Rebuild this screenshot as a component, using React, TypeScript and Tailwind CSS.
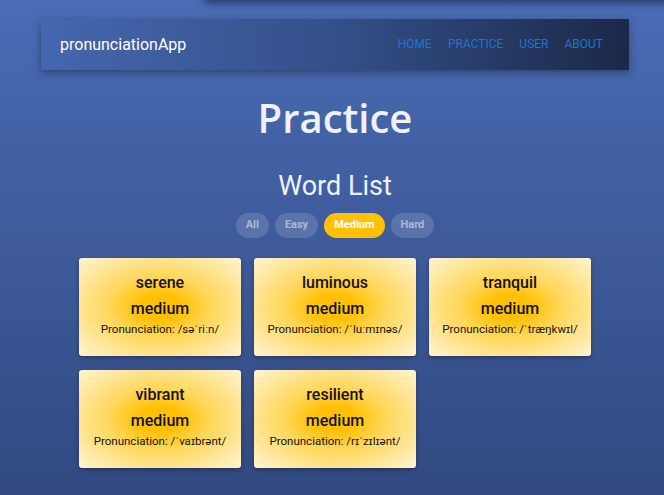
import { useState } from 'react';

interface Word {
  word: string;
  level: string;
  ipa: string;
}

const WORDS: Word[] = [
  { word: 'serene', level: 'medium', ipa: '/səˈriːn/' },
  { word: 'luminous', level: 'medium', ipa: '/ˈluːmɪnəs/' },
  { word: 'tranquil', level: 'medium', ipa: '/ˈtræŋkwɪl/' },
  { word: 'vibrant', level: 'medium', ipa: '/ˈvaɪbrənt/' },
  { word: 'resilient', level: 'medium', ipa: '/rɪˈzɪlɪənt/' },
];

const FILTERS = ['All', 'Easy', 'Medium', 'Hard'];
const LINKS = ['Home', 'Practice', 'User', 'About'];

export default function App() {
  const [filter, setFilter] = useState('Medium');

  return (
    <div
      className="relative min-h-[495px] overflow-hidden bg-gradient-to-b from-[#4a6cb5] to-[#314980] pl-[6px] pb-6"
      style={{ fontFamily: 'Roboto, "Liberation Sans", sans-serif' }}
    >
      {/* dark panel peeking in from above */}
      <div className="absolute left-[205px] -right-4 -top-6 h-6 bg-[#2c3e66] shadow-[0_2px_8px_rgba(10,20,40,0.7)]" />

      <div className="mx-auto w-[588px] pt-[19px]">
        <nav className="flex h-[51px] items-center justify-between bg-gradient-to-r from-[#4567ad] via-[#34508a] to-[#1b2948] pl-[19px] pr-[26px] shadow-[0_3px_8px_rgba(0,0,0,0.35)]">
          <span className="text-[16px] text-white">pronunciationApp</span>
          <div className="flex gap-[16px] pb-[2px] text-[12px] uppercase text-[#1976d2]">
            {LINKS.map((l) => (
              <a key={l} href="#">
                {l}
              </a>
            ))}
          </div>
        </nav>
      </div>

      <h1
        className="mt-[24px] text-center text-[40px] font-semibold leading-[48px] text-[#eef2fb]"
        style={{ fontFamily: '"Open Sans", "Liberation Sans", sans-serif' }}
      >
        Practice
      </h1>

      <h2 className="mt-[28px] text-center text-[27px] font-normal leading-[32px] text-[#eef2fb]">Word List</h2>

      <div className="mt-[11px] flex justify-center gap-[6px]">
        {FILTERS.map((f) => {
          const active = f === filter;
          return (
            <button
              key={f}
              onClick={() => setFilter(f)}
              className={`h-[25px] rounded-full px-[10px] text-[11px] font-bold ${
                active ? 'bg-[#ffc107] px-[9px] text-white' : 'bg-white/15 text-white/50'
              }`}
            >
              {f}
            </button>
          );
        })}
      </div>

      <div className="mx-auto mt-[20px] grid w-[512px] grid-cols-3 gap-x-[13px] gap-y-[14px]">
        {WORDS.map((w) => (
          <div
            key={w.word}
            className="flex h-[98px] flex-col items-center rounded-[3px] bg-[radial-gradient(ellipse_at_center,#ffc107_0%,#ffc107_18%,#ffd75a_45%,#fff4d4_100%)] pt-[14px] text-[#111] shadow-[0_2px_4px_rgba(0,0,0,0.3)]"
          >
            <div className="text-[16px] font-medium leading-[22px]">{w.word}</div>
            <div className="mt-[4px] text-[16px] font-medium leading-[22px]">{w.level}</div>
            <div className="mt-[1px] text-[11.5px] leading-[16px]">Pronunciation: {w.ipa}</div>
          </div>
        ))}
      </div>
    </div>
  );
}
